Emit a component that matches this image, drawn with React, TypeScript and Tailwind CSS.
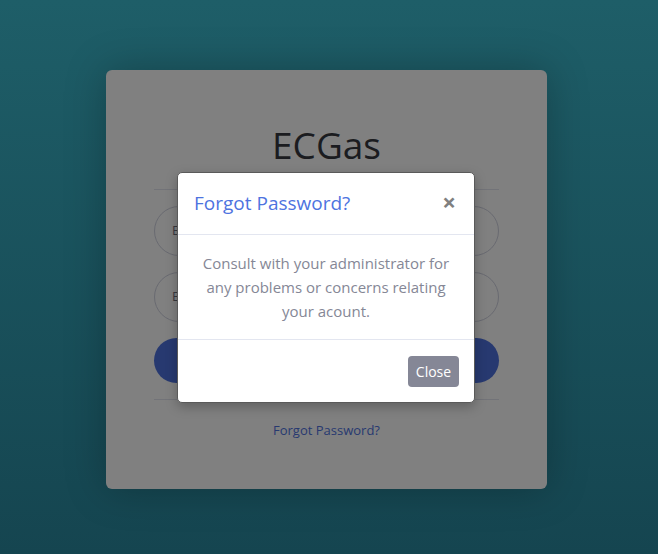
export default function App() {
  return (
    <div
      className="relative min-h-[554px] w-full overflow-hidden bg-linear-to-b from-[#1e5e68] to-[#154550] pt-[70px]"
      style={{ fontFamily: '"Open Sans", "Noto Sans", sans-serif' }}
    >
      {/* Login card (dimmed by the modal backdrop) */}
      <div className="ml-[106px] flex h-[419px] w-[441px] flex-col rounded-md bg-[#808080] px-12 pt-[51px] shadow-[0_0_40px_rgba(0,0,0,0.25)]">
        <h1 className="text-center text-[37px] leading-[48px] font-normal text-[#1b1c20]">ECGas</h1>
        <hr className="mt-[20px] border-t border-[#727378]" />
        <form className="mt-4 flex flex-col gap-4">
          <div className="flex h-[50px] items-center rounded-full border border-[#696a71] px-[17px] text-[13px] text-[#37383f]">
            Enter Email Address...
          </div>
          <div className="flex h-[50px] items-center rounded-full border border-[#696a71] px-[17px] text-[13px] text-[#37383f]">
            Enter Password
          </div>
          <div className="flex h-[45px] items-center justify-center rounded-full bg-[#273970] text-[13px] text-[#808080]">
            Login
          </div>
        </form>
        <hr className="mt-4 border-t border-[#727378]" />
        <div className="mt-[21px] text-center text-[13px] text-[#273970]">Forgot Password?</div>
      </div>

      {/* Modal */}
      <div className="absolute top-[172px] left-[177px] w-[298px] rounded-[5px] border border-[#5a5a5a] bg-white shadow-[0_4px_12px_rgba(0,0,0,0.25)]">
        <div className="flex h-[62px] items-center justify-between border-b border-[#e3e6f0] px-4">
          <h5 className="text-[19px] text-[#4e73df]">Forgot Password?</h5>
          <span className="mr-[2px] -mt-[3px] text-[24px] leading-none font-bold text-[#808080]">×</span>
        </div>
        <div className="flex flex-col items-center p-4 text-[15px] leading-6 whitespace-nowrap text-[#858796]">
          <p>Consult with your administrator for</p>
          <p>any problems or concerns relating</p>
          <p>your acount.</p>
        </div>
        <div className="flex h-[63px] items-center justify-end border-t border-[#e3e6f0] px-[15px]">
          <button className="h-[31px] w-[51px] rounded-[4px] bg-[#858796] text-[14px] text-white">Close</button>
        </div>
      </div>
    </div>
  );
}
